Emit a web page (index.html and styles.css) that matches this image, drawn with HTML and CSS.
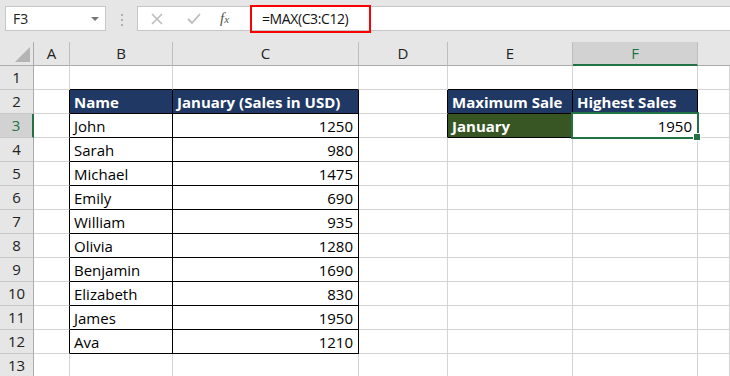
FILE: index.html
```html
<!DOCTYPE html>
<html lang="en">
<head>
    <meta charset="UTF-8">
    <meta name="viewport" content="width=device-width, initial-scale=1.0">
    <title>MAX - Highest Sales</title>
    <link rel="stylesheet" href="styles.css">
</head>
<body>
    <div class="toolbar">
        <div class="namebox">F3<span class="caret"></span></div>
        <div class="dots"><i></i><i></i><i></i></div>
        <div class="fbar">
            <div class="fbtns">
                <svg width="14" height="14" viewBox="0 0 14 14"><path d="M2 2L12 12M12 2L2 12" stroke="#bcbcbc" stroke-width="1.6" fill="none"/></svg>
                <svg width="16" height="14" viewBox="0 0 16 14"><path d="M2 7L6 11L14 2" stroke="#bcbcbc" stroke-width="1.8" fill="none"/></svg>
                <span class="fx">f<small>x</small></span>
            </div>
            <div class="formula">=MAX(C3:C12)</div>
        </div>
    </div>

    <div class="sheet">
        <div class="ch corner"><span class="tri"></span></div>
        <div class="ch">A</div>
        <div class="ch">B</div>
        <div class="ch">C</div>
        <div class="ch">D</div>
        <div class="ch">E</div>
        <div class="ch on">F</div>
        <div class="ch last"></div>

        <div class="rh">1</div>
        <div class="cell"></div>
        <div class="cell bb"></div>
        <div class="cell bb"></div>
        <div class="cell"></div>
        <div class="cell bb"></div>
        <div class="cell bb"></div>
        <div class="cell"></div>

        <div class="rh">2</div>
        <div class="cell br"></div>
        <div class="cell box hd">Name</div>
        <div class="cell box hd">January (Sales in USD)</div>
        <div class="cell br"></div>
        <div class="cell box hd">Maximum Sale</div>
        <div class="cell box hd">Highest Sales</div>
        <div class="cell"></div>

        <div class="rh on">3</div>
        <div class="cell br"></div>
        <div class="cell box">John</div>
        <div class="cell box num">1250</div>
        <div class="cell br"></div>
        <div class="cell box month">January</div>
        <div class="cell box num sel">1950</div>
        <div class="cell"></div>

        <div class="rh">4</div>
        <div class="cell br"></div>
        <div class="cell box">Sarah</div>
        <div class="cell box num">980</div>
        <div class="cell"></div>
        <div class="cell"></div>
        <div class="cell"></div>
        <div class="cell"></div>

        <div class="rh">5</div>
        <div class="cell br"></div>
        <div class="cell box">Michael</div>
        <div class="cell box num">1475</div>
        <div class="cell"></div>
        <div class="cell"></div>
        <div class="cell"></div>
        <div class="cell"></div>

        <div class="rh">6</div>
        <div class="cell br"></div>
        <div class="cell box">Emily</div>
        <div class="cell box num">690</div>
        <div class="cell"></div>
        <div class="cell"></div>
        <div class="cell"></div>
        <div class="cell"></div>

        <div class="rh">7</div>
        <div class="cell br"></div>
        <div class="cell box">William</div>
        <div class="cell box num">935</div>
        <div class="cell"></div>
        <div class="cell"></div>
        <div class="cell"></div>
        <div class="cell"></div>

        <div class="rh">8</div>
        <div class="cell br"></div>
        <div class="cell box">Olivia</div>
        <div class="cell box num">1280</div>
        <div class="cell"></div>
        <div class="cell"></div>
        <div class="cell"></div>
        <div class="cell"></div>

        <div class="rh">9</div>
        <div class="cell br"></div>
        <div class="cell box">Benjamin</div>
        <div class="cell box num">1690</div>
        <div class="cell"></div>
        <div class="cell"></div>
        <div class="cell"></div>
        <div class="cell"></div>

        <div class="rh">10</div>
        <div class="cell br"></div>
        <div class="cell box">Elizabeth</div>
        <div class="cell box num">830</div>
        <div class="cell"></div>
        <div class="cell"></div>
        <div class="cell"></div>
        <div class="cell"></div>

        <div class="rh">11</div>
        <div class="cell br"></div>
        <div class="cell box">James</div>
        <div class="cell box num">1950</div>
        <div class="cell"></div>
        <div class="cell"></div>
        <div class="cell"></div>
        <div class="cell"></div>

        <div class="rh">12</div>
        <div class="cell br"></div>
        <div class="cell box">Ava</div>
        <div class="cell box num">1210</div>
        <div class="cell"></div>
        <div class="cell"></div>
        <div class="cell"></div>
        <div class="cell"></div>

        <div class="rh">13</div>
        <div class="cell"></div>
        <div class="cell"></div>
        <div class="cell"></div>
        <div class="cell"></div>
        <div class="cell"></div>
        <div class="cell"></div>
        <div class="cell"></div>
    </div>
</body>
</html>
```

FILE: styles.css
```css
* {
    box-sizing: border-box;
}
body {
    margin: 0;
    width: 730px;
    height: 376px;
    overflow: hidden;
    background: #e6e6e6;
    font-family: "Open Sans", sans-serif;
}
.toolbar {
    display: flex;
    height: 42px;
    padding: 6px 0 0 5px;
}
.namebox {
    position: relative;
    width: 101px;
    height: 25px;
    background: #fff;
    border: 1px solid #c6c6c6;
    font-size: 14px;
    line-height: 23px;
    padding-left: 7px;
    color: #222;
}
.caret {
    position: absolute;
    right: 6px;
    top: 10px;
    border-left: 4px solid transparent;
    border-right: 4px solid transparent;
    border-top: 4px solid #777;
}
.dots {
    width: 31px;
    display: flex;
    flex-direction: column;
    align-items: center;
    padding-top: 8px;
    gap: 3px;
}
.dots i {
    width: 2px;
    height: 2px;
    background: #b0b0b0;
}
.fbar {
    flex: 1;
    display: flex;
    height: 25px;
    background: #fff;
    border: 1px solid #c6c6c6;
    border-right: none;
}
.fbtns {
    width: 112px;
    display: flex;
    align-items: center;
    gap: 22px;
    padding-left: 12px;
}
.fx {
    font-family: "Liberation Serif", serif;
    font-style: italic;
    font-size: 15px;
    color: #555;
    margin-left: -4px;
}
.fx small {
    font-size: 11px;
}
.formula {
    width: 121px;
    height: 28px;
    margin: -2px 0 -2px 0;
    border: 2px solid #f00;
    padding-left: 10px;
    font-size: 14px;
    letter-spacing: -0.4px;
    line-height: 24px;
    color: #111;
}
.sheet {
    display: grid;
    grid-template-columns: 34px 36px 103px 186px 89px 125px 125px 1fr;
    grid-auto-rows: 24px;
    font-size: 15px;
}
.ch, .rh {
    background: #e6e6e6;
    font-size: 15px;
    color: #222;
    text-align: center;
    line-height: 23px;
}
.ch {
    border-right: 1px solid #bdbdbd;
    border-bottom: 1px solid #ababab;
}
.ch.last {
    border-right: none;
}
.ch.on {
    background: #d2d2d2;
    color: #217346;
    border-bottom: 2px solid #217346;
}
.corner {
    position: relative;
    border-right: 1px solid #ababab;
}
.tri {
    position: absolute;
    right: 3px;
    bottom: 3px;
    border-left: 15px solid transparent;
    border-bottom: 15px solid #b4b4b4;
}
.rh {
    border-right: 1px solid #ababab;
    border-bottom: 1px solid #c8c8c8;
}
.rh.on {
    background: #d2d2d2;
    color: #217346;
    border-right: 2px solid #217346;
}
.cell {
    background: #fff;
    border-right: 1px solid #d4d4d4;
    border-bottom: 1px solid #d4d4d4;
    padding: 0 5px 0 4px;
    line-height: 25px;
    white-space: nowrap;
    overflow: hidden;
    color: #000;
}
.bb {
    border-bottom-color: #000;
}
.br {
    border-right-color: #000;
}
.box {
    border-right-color: #000;
    border-bottom-color: #000;
}
.hd {
    background: #203864;
    color: #fff;
    font-weight: bold;
}
.month {
    background: #375623;
    color: #fff;
    font-weight: bold;
}
.num {
    text-align: right;
}
.sel {
    position: relative;
    overflow: visible;
}
.sel::after {
    content: "";
    position: absolute;
    left: -2px;
    top: -2px;
    right: -2px;
    bottom: -2px;
    border: 2px solid #217346;
}
.sel::before {
    content: "";
    position: absolute;
    right: -4px;
    bottom: -4px;
    width: 6px;
    height: 6px;
    background: #217346;
    border: 1px solid #fff;
    z-index: 1;
}
```
